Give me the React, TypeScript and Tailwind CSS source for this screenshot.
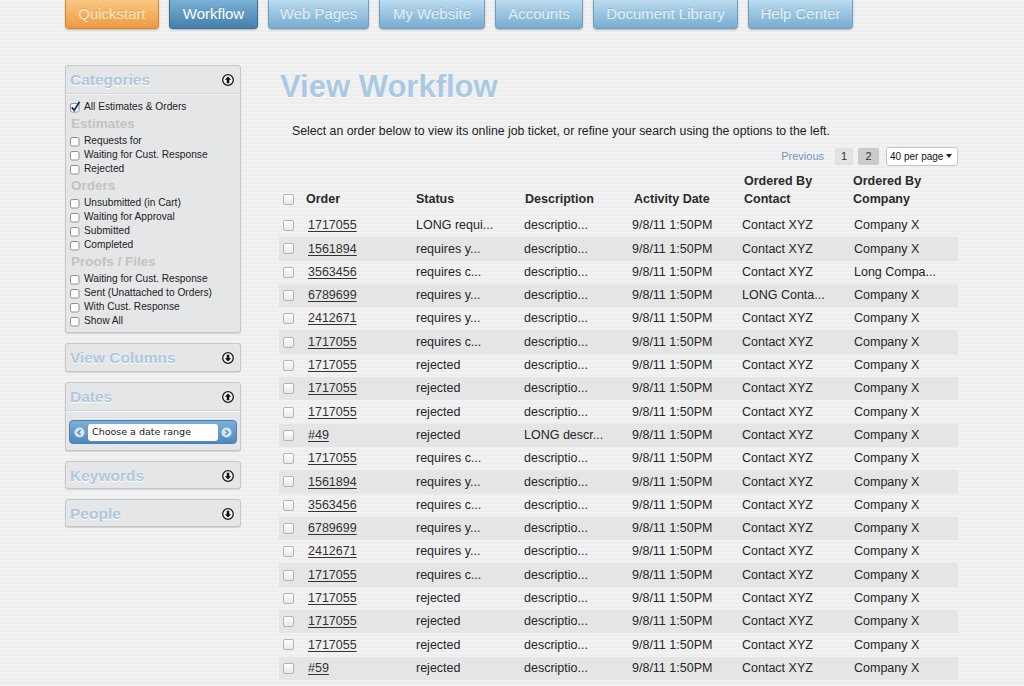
import React from 'react';

const tabs = [
  { label: 'Quickstart', cls: 'w-[94px] bg-gradient-to-b from-[#fac781] to-[#ec9b3d] border-[#d98a30] text-[#fde6c6]' },
  { label: 'Workflow', cls: 'w-[89px] bg-gradient-to-b from-[#79b1d6] to-[#4581ab] border-[#3b6f95] text-white' },
  { label: 'Web Pages', cls: 'w-[101px] bg-gradient-to-b from-[#bcdcf0] to-[#77acd0] border-[#6e9fc2] text-[#e2f0fa]' },
  { label: 'My Website', cls: 'w-[106px] bg-gradient-to-b from-[#bcdcf0] to-[#77acd0] border-[#6e9fc2] text-[#e2f0fa]' },
  { label: 'Accounts', cls: 'w-[88px] bg-gradient-to-b from-[#bcdcf0] to-[#77acd0] border-[#6e9fc2] text-[#e2f0fa]' },
  { label: 'Document Library', cls: 'w-[145px] bg-gradient-to-b from-[#bcdcf0] to-[#77acd0] border-[#6e9fc2] text-[#e2f0fa]' },
  { label: 'Help Center', cls: 'w-[105px] bg-gradient-to-b from-[#bcdcf0] to-[#77acd0] border-[#6e9fc2] text-[#e2f0fa]' },
];

type Row = { order: string; status: string; desc: string; contact: string; company: string };

const rows: Row[] = [
  { order: '1717055', status: 'LONG requi...', desc: 'descriptio...', contact: 'Contact XYZ', company: 'Company X' },
  { order: '1561894', status: 'requires y...', desc: 'descriptio...', contact: 'Contact XYZ', company: 'Company X' },
  { order: '3563456', status: 'requires c...', desc: 'descriptio...', contact: 'Contact XYZ', company: 'Long Compa...' },
  { order: '6789699', status: 'requires y...', desc: 'descriptio...', contact: 'LONG Conta...', company: 'Company X' },
  { order: '2412671', status: 'requires y...', desc: 'descriptio...', contact: 'Contact XYZ', company: 'Company X' },
  { order: '1717055', status: 'requires c...', desc: 'descriptio...', contact: 'Contact XYZ', company: 'Company X' },
  { order: '1717055', status: 'rejected', desc: 'descriptio...', contact: 'Contact XYZ', company: 'Company X' },
  { order: '1717055', status: 'rejected', desc: 'descriptio...', contact: 'Contact XYZ', company: 'Company X' },
  { order: '1717055', status: 'rejected', desc: 'descriptio...', contact: 'Contact XYZ', company: 'Company X' },
  { order: '#49', status: 'rejected', desc: 'LONG descr...', contact: 'Contact XYZ', company: 'Company X' },
  { order: '1717055', status: 'requires c...', desc: 'descriptio...', contact: 'Contact XYZ', company: 'Company X' },
  { order: '1561894', status: 'requires y...', desc: 'descriptio...', contact: 'Contact XYZ', company: 'Company X' },
  { order: '3563456', status: 'requires c...', desc: 'descriptio...', contact: 'Contact XYZ', company: 'Company X' },
  { order: '6789699', status: 'requires y...', desc: 'descriptio...', contact: 'Contact XYZ', company: 'Company X' },
  { order: '2412671', status: 'requires y...', desc: 'descriptio...', contact: 'Contact XYZ', company: 'Company X' },
  { order: '1717055', status: 'requires c...', desc: 'descriptio...', contact: 'Contact XYZ', company: 'Company X' },
  { order: '1717055', status: 'rejected', desc: 'descriptio...', contact: 'Contact XYZ', company: 'Company X' },
  { order: '1717055', status: 'rejected', desc: 'descriptio...', contact: 'Contact XYZ', company: 'Company X' },
  { order: '1717055', status: 'rejected', desc: 'descriptio...', contact: 'Contact XYZ', company: 'Company X' },
  { order: '#59', status: 'rejected', desc: 'descriptio...', contact: 'Contact XYZ', company: 'Company X' },
];

function CircleArrow({ up }: { up: boolean }) {
  return (
    <svg width="12" height="12" viewBox="0 0 12 12">
      <circle cx="6" cy="6" r="5.3" fill="#f4f4f4" stroke="#1a1a1a" strokeWidth="1.3" />
      {up ? (
        <path d="M6 2.4 L9.2 5.8 H7.3 V9.3 H4.7 V5.8 H2.8 Z" fill="#111" />
      ) : (
        <path d="M6 9.6 L9.2 6.2 H7.3 V2.7 H4.7 V6.2 H2.8 Z" fill="#111" />
      )}
    </svg>
  );
}

function SmallBox({ checked }: { checked?: boolean }) {
  return (
    <svg width="11" height="12" viewBox="0 0 11 12" className="shrink-0">
      <rect x="0.5" y="2.5" width="8.5" height="8.5" rx="1.6" fill="#fff" stroke="#8f8f8f" />
      {checked && <path d="M1.8 6.3 L4.2 9.2 L9.6 0.8" fill="none" stroke="#1c3566" strokeWidth="1.9" />}
    </svg>
  );
}

function RowBox() {
  return (
    <span className="block w-[11px] h-[11px] rounded-[2px] border border-[#b4b4b4] bg-gradient-to-b from-[#ffffff] to-[#e8e8e8]" />
  );
}

function PanelHeader({ title, up }: { title: string; up: boolean }) {
  return (
    <div className="h-[27px] flex items-center justify-between pl-[4px] pr-[6px]">
      <span className="text-[15.5px] font-bold text-[#b0c7de] [text-shadow:0_1px_0_#ffffff]">{title}</span>
      <CircleArrow up={up} />
    </div>
  );
}

const panelCls =
  'bg-[#e5e6e8] border border-[#c4c7cb] rounded-[3px] shadow-[0_1px_1px_rgba(0,0,0,0.12)]';

function Item({ label, checked }: { label: string; checked?: boolean }) {
  return (
    <div className="h-[14px] flex items-center gap-[3px] text-[10.2px] text-[#222]">
      <SmallBox checked={checked} />
      <span>{label}</span>
    </div>
  );
}

function Section({ label }: { label: string }) {
  return <div className="h-[20px] leading-[20px] pl-[1px] text-[13.5px] font-bold text-[#c3c3c3]">{label}</div>;
}

const gridCols = 'grid grid-cols-[27px_110px_109px_109px_110px_109px_105px]';

export default function App() {
  return (
    <div className="w-[1024px] h-[686px] overflow-hidden font-['Liberation_Sans',Arial,sans-serif] bg-[repeating-linear-gradient(0deg,#f2f2f2_0px,#f2f2f2_2px,#eeeeee_2px,#eeeeee_4px)]">
      {/* Nav */}
      <div className="flex gap-[10px] pl-[65px]">
        {tabs.map((t) => (
          <div
            key={t.label}
            className={`h-[29px] flex items-center justify-center rounded-b-[4px] border border-t-0 text-[15px] shadow-[0_1px_2px_rgba(0,0,0,0.25)] [text-shadow:0_-1px_0_rgba(0,0,0,0.12)] ${t.cls}`}
          >
            {t.label}
          </div>
        ))}
      </div>

      <div className="flex gap-[38px] pl-[65px] pt-[36px]">
        {/* Sidebar */}
        <div className="w-[176px] flex flex-col gap-[10px]">
          <div className={`${panelCls} h-[268px]`}>
            <PanelHeader title="Categories" up />
            <div className="border-t border-[#d3d5d8] shadow-[inset_0_1px_0_#f4f5f6] pl-[4px] pt-[6px]">
              <Item label="All Estimates & Orders" checked />
              <Section label="Estimates" />
              <Item label="Requests for" />
              <Item label="Waiting for Cust. Response" />
              <Item label="Rejected" />
              <Section label="Orders" />
              <Item label="Unsubmitted (in Cart)" />
              <Item label="Waiting for Approval" />
              <Item label="Submitted" />
              <Item label="Completed" />
              <Section label="Proofs / Files" />
              <Item label="Waiting for Cust. Response" />
              <Item label="Sent (Unattached to Orders)" />
              <Item label="With Cust. Response" />
              <Item label="Show All" />
            </div>
          </div>

          <div className={`${panelCls} h-[29px]`}>
            <PanelHeader title="View Columns" up={false} />
          </div>

          <div className={`${panelCls} h-[69px]`}>
            <PanelHeader title="Dates" up />
            <div className="border-t border-[#d3d5d8] shadow-[inset_0_1px_0_#f4f5f6] px-[3px] pt-[9px]">
              <div className="h-[24px] rounded-[4px] border border-[#4b80ae] bg-gradient-to-b from-[#7db0da] to-[#4f88ba] flex items-center justify-between px-[4px]">
                <svg width="11" height="11" viewBox="0 0 11 11">
                  <circle cx="5.5" cy="5.5" r="5" fill="#d6e6f4" />
                  <path d="M6.6 3 L4.1 5.5 L6.6 8" fill="none" stroke="#5b8fbf" strokeWidth="1.6" />
                </svg>
                <div className="w-[130px] h-[17px] rounded-[3px] bg-white flex items-center pl-[4px] text-[9.5px] text-[#222] font-['DejaVu_Sans',sans-serif]">
                  Choose a date range
                </div>
                <svg width="11" height="11" viewBox="0 0 11 11">
                  <circle cx="5.5" cy="5.5" r="5" fill="#d6e6f4" />
                  <path d="M4.4 3 L6.9 5.5 L4.4 8" fill="none" stroke="#5b8fbf" strokeWidth="1.6" />
                </svg>
              </div>
            </div>
          </div>

          <div className={`${panelCls} h-[28px]`}>
            <PanelHeader title="Keywords" up={false} />
          </div>

          <div className={`${panelCls} h-[28px]`}>
            <PanelHeader title="People" up={false} />
          </div>
        </div>

        {/* Main */}
        <div className="w-[679px]">
          <h1 className="mt-[4px] h-[36px] leading-[36px] pl-[1px] text-[31px] font-bold text-[#a9c9e4] [text-shadow:0_1px_0_#ffffff]">
            View Workflow
          </h1>
          <p className="mt-[18px] h-[16px] leading-[16px] pl-[13px] text-[12.3px] text-[#222]">
            Select an order below to view its online job ticket, or refine your search using the options to the left.
          </p>

          <div className="mt-[8px] h-[18px] flex items-center justify-end text-[11px]">
            <span className="text-[#6f98c0] mr-[11px]">Previous</span>
            <span className="w-[18px] h-[17px] rounded-[2px] bg-[#e2e2e2] flex items-center justify-center text-[#333]">1</span>
            <span className="ml-[5px] w-[21px] h-[17px] rounded-[2px] bg-[#cbcbcb] flex items-center justify-center text-[#333]">2</span>
            <span className="ml-[7px] w-[72px] h-[19px] rounded-[3px] border border-[#c6c6c6] bg-white flex items-center justify-between pl-[3px] pr-[5px] text-[10px] text-[#111] whitespace-nowrap">
              <span>40 per page</span>
              <svg width="6" height="4" viewBox="0 0 6 4" className="shrink-0">
                <path d="M0 0 H6 L3 4 Z" fill="#222" />
              </svg>
            </span>
          </div>

          {/* Table header */}
          <div className={`${gridCols} h-[49px] items-end pb-[6px] text-[12.5px] leading-[18px] font-bold text-[#2a2a2a]`}>
            <div className="h-[18px] flex items-center pl-[4px]">
              <RowBox />
            </div>
            <div>Order</div>
            <div>Status</div>
            <div>Description</div>
            <div>Activity Date</div>
            <div>
              Ordered By
              <br />
              Contact
            </div>
            <div>
              Ordered By
              <br />
              Company
            </div>
          </div>

          {/* Rows */}
          {rows.map((r, i) => (
            <div
              key={i}
              className={`${gridCols} h-[23.3px] items-center text-[12.5px] text-[#262626] ${i % 2 === 1 ? 'bg-[#e5e5e5]' : ''}`}
            >
              <div className="pl-[4px] flex items-center">
                <RowBox />
              </div>
              <div className="pl-[2px]">
                <span className="underline underline-offset-2 text-[#333]">{r.order}</span>
              </div>
              <div>{r.status}</div>
              <div className="-ml-[1px]">{r.desc}</div>
              <div className="-ml-[2px]">9/8/11 1:50PM</div>
              <div className="-ml-[2px]">{r.contact}</div>
              <div className="pl-[1px]">{r.company}</div>
            </div>
          ))}
        </div>
      </div>
    </div>
  );
}
